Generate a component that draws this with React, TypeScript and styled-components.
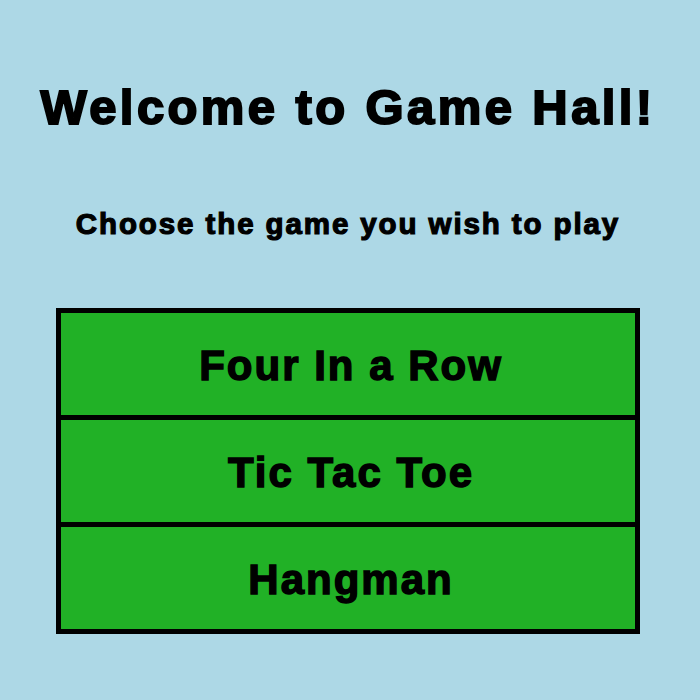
import React from 'react';
import styled, {createGlobalStyle} from 'styled-components';

const GlobalStyle = createGlobalStyle`
  html, body {
    margin: 0;
    background-color: #add8e6;
  }
  body {
    font-family: "Liberation Sans", Arial, sans-serif;
  }
`;

const games = ['Four In a Row', 'Tic Tac Toe', 'Hangman'];

const App = () => {
  return (
    <Page>
      <GlobalStyle/>
      <Title>Welcome to Game Hall!</Title>
      <Subtitle>Choose the game you wish to play</Subtitle>
      <GameList>
        {games.map((name) => (
          <GameButton key={name}>{name}</GameButton>
        ))}
      </GameList>
    </Page>
  );
};

const Page = styled.div`
  display: flex;
  flex-direction: column;
  align-items: center;
  width: 696px;
  padding-top: 79px;
`;

const Title = styled.h1`
  margin: 0;
  font-size: 49px;
  font-weight: 700;
  letter-spacing: 3.4px;
  -webkit-text-stroke: 2px #000;
  color: #000;
  line-height: 56px;
`;

const Subtitle = styled.h2`
  margin: 72px 0 0;
  font-size: 29.5px;
  font-weight: 700;
  letter-spacing: 1.9px;
  -webkit-text-stroke: 1.2px #000;
  color: #000;
  line-height: 34px;
`;

const GameList = styled.div`
  display: flex;
  flex-direction: column;
  gap: 5px;
  width: 574px;
  margin-top: 67px;
  border: 5px solid #000;
  background-color: #000;
`;

const GameButton = styled.div`
  display: flex;
  justify-content: center;
  align-items: center;
  box-sizing: border-box;
  height: 102px;
  padding: 4px 0 0 6px;
  background-color: #21b126;
  font-size: 42px;
  font-weight: 700;
  letter-spacing: 2px;
  -webkit-text-stroke: 1.4px #000;
  color: #000;
  cursor: pointer;
  user-select: none;
`;

export default App;
